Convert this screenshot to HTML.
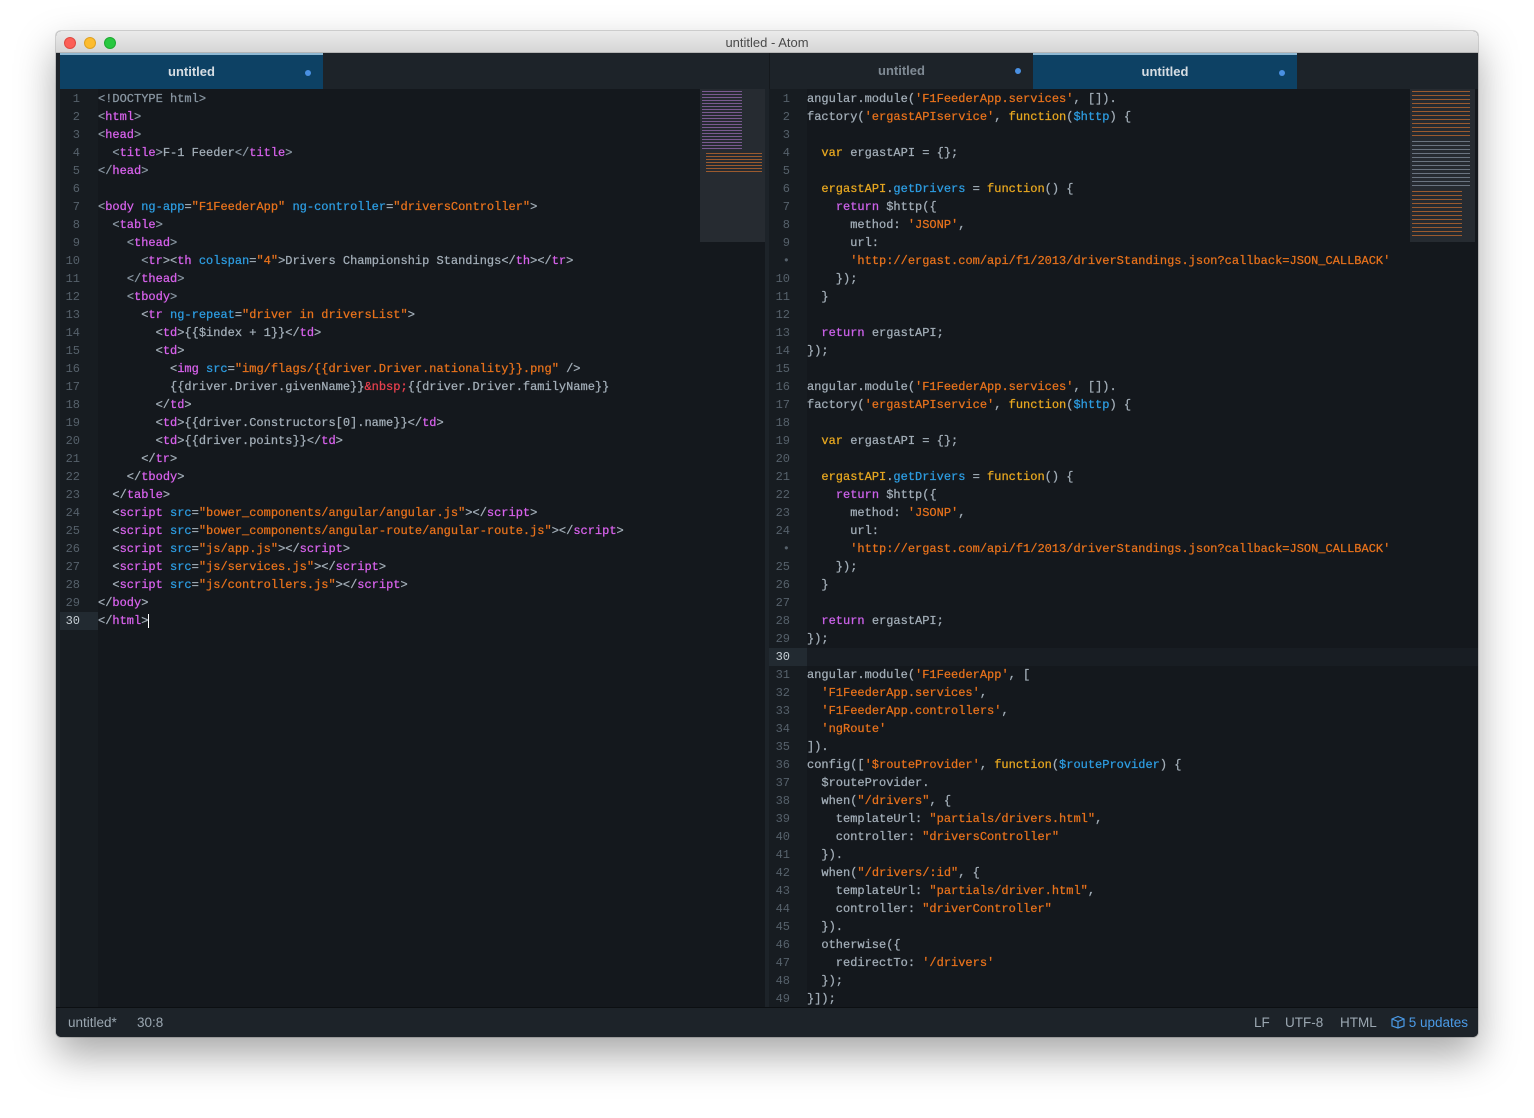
<!DOCTYPE html>
<html><head><meta charset="utf-8">
<style>
*{margin:0;padding:0;box-sizing:border-box}
body{width:1534px;height:1118px;background:#fff;position:relative;overflow:hidden;font-family:"Liberation Sans",sans-serif}
.win{position:absolute;left:56px;top:31px;width:1422px;height:1006px;background:#14181d;border-radius:5px;overflow:hidden;box-shadow:0 18px 40px rgba(0,0,0,.35),0 0 0 1px rgba(0,0,0,.15)}
.title{position:absolute;left:0;top:0;width:100%;height:22px;background:linear-gradient(#ebebeb,#d6d6d6);border-bottom:1px solid #b5b5b5;text-align:center;font-size:13px;line-height:23px;color:#4a4a4a}
.dot{position:absolute;top:6px;width:12px;height:12px;border-radius:50%}
.tabs{position:absolute;top:22px;left:0;width:100%;height:36px;background:#1d2329}
.tab{position:absolute;top:0;height:36px;font-size:13px;line-height:35px;text-align:center;color:#7f8a94;font-weight:600}
.tab.act{background:#0d4164;color:#d6dde3;border-top:2px solid #8fb9d4;line-height:33px}
.tab b{position:absolute;right:12px;top:15px;width:6px;height:6px;border-radius:50%;background:#4a90e2}
.pane{position:absolute;top:58px;height:918px;background:#14181d;overflow:hidden}
.gut{position:absolute;top:0;left:0;height:100%;background:#171c21}
pre{position:absolute;top:1px;font-family:"Liberation Mono",monospace;font-size:12px;line-height:18px;color:#a3aeb8;white-space:pre;-webkit-text-stroke:0.25px}
.nums{text-align:right;color:#56616b;-webkit-text-stroke:0}
.t{color:#d862ec}.a{color:#2d9de2}.s{color:#e8721c}.k{color:#e8a820}.r{color:#cc62ea}.e{color:#e8404e}.g{color:#8a97a3}
.mm{position:absolute;top:0;width:65px;height:153px;background:#262b31}
.status{position:absolute;left:0;top:976px;width:100%;height:30px;background:#1d2329;border-top:1px solid #0c0f12;font-size:13.5px;line-height:30px;color:#9ba7b1}
</style></head><body>
<div class="win">
 <div class="title">untitled - Atom
  <div class="dot" style="left:8px;background:#fc5f57;border:1px solid #de4a42"></div>
  <div class="dot" style="left:28px;background:#fdbc2e;border:1px solid #dea123"></div>
  <div class="dot" style="left:48px;background:#28c840;border:1px solid #1ea931"></div>
 </div>
 <div class="tabs">
  <div class="tab act" style="left:4px;width:263px">untitled<b></b></div>
  <div class="tab" style="left:713px;width:264px;border-left:1px solid #15191d">untitled<b></b></div>
  <div class="tab act" style="left:977px;width:264px">untitled<b></b></div>
 </div>
 <div style="position:absolute;left:0;top:58px;width:4px;height:918px;background:#1d2329"></div>
 <div class="pane" style="left:4px;width:705px">
  <div class="gut" style="width:38px"></div>
  <div style="position:absolute;left:0;top:523px;width:38px;height:18px;background:#222a31"></div>
  <pre class="nums" style="left:0;width:20px"><span>1
2
3
4
5
6
7
8
9
10
11
12
13
14
15
16
17
18
19
20
21
22
23
24
25
26
27
28
29
</span><span style="color:#c8d0d6">30</span></pre>
  <pre style="left:38px"><span class="g">&lt;!DOCTYPE html&gt;</span>
<span class="g">&lt;</span><span class="t">html</span><span class="g">&gt;</span>
<span class="g">&lt;</span><span class="t">head</span><span class="g">&gt;</span>
  <span class="g">&lt;</span><span class="t">title</span><span class="g">&gt;</span>F-1 Feeder<span class="g">&lt;/</span><span class="t">title</span><span class="g">&gt;</span>
<span class="g">&lt;/</span><span class="t">head</span><span class="g">&gt;</span>

<span class="g">&lt;</span><span class="t">body</span> <span class="a">ng-app</span>=<span class="s">"F1FeederApp"</span> <span class="a">ng-controller</span>=<span class="s">"driversController"</span>&gt;
  <span class="g">&lt;</span><span class="t">table</span><span class="g">&gt;</span>
    <span class="g">&lt;</span><span class="t">thead</span><span class="g">&gt;</span>
      <span class="g">&lt;</span><span class="t">tr</span>&gt;&lt;<span class="t">th</span> <span class="a">colspan</span>=<span class="s">"4"</span>&gt;Drivers Championship Standings&lt;/<span class="t">th</span>&gt;&lt;/<span class="t">tr</span>&gt;
    <span class="g">&lt;/</span><span class="t">thead</span><span class="g">&gt;</span>
    <span class="g">&lt;</span><span class="t">tbody</span><span class="g">&gt;</span>
      &lt;<span class="t">tr</span> <span class="a">ng-repeat</span>=<span class="s">"driver in driversList"</span>&gt;
        &lt;<span class="t">td</span>&gt;{{$index + 1}}&lt;/<span class="t">td</span>&gt;
        &lt;<span class="t">td</span>&gt;
          &lt;<span class="t">img</span> <span class="a">src</span>=<span class="s">"img/flags/{{driver.Driver.nationality}}.png"</span> /&gt;
          {{driver.Driver.givenName}}<span class="e">&amp;nbsp;</span>{{driver.Driver.familyName}}
        &lt;/<span class="t">td</span>&gt;
        &lt;<span class="t">td</span>&gt;{{driver.Constructors[0].name}}&lt;/<span class="t">td</span>&gt;
        &lt;<span class="t">td</span>&gt;{{driver.points}}&lt;/<span class="t">td</span>&gt;
      &lt;/<span class="t">tr</span>&gt;
    &lt;/<span class="t">tbody</span>&gt;
  &lt;/<span class="t">table</span>&gt;
  &lt;<span class="t">script</span> <span class="a">src</span>=<span class="s">"bower_components/angular/angular.js"</span>&gt;&lt;/<span class="t">script</span>&gt;
  &lt;<span class="t">script</span> <span class="a">src</span>=<span class="s">"bower_components/angular-route/angular-route.js"</span>&gt;&lt;/<span class="t">script</span>&gt;
  &lt;<span class="t">script</span> <span class="a">src</span>=<span class="s">"js/app.js"</span>&gt;&lt;/<span class="t">script</span>&gt;
  &lt;<span class="t">script</span> <span class="a">src</span>=<span class="s">"js/services.js"</span>&gt;&lt;/<span class="t">script</span>&gt;
  &lt;<span class="t">script</span> <span class="a">src</span>=<span class="s">"js/controllers.js"</span>&gt;&lt;/<span class="t">script</span>&gt;
&lt;/<span class="t">body</span>&gt;
&lt;/<span class="t">html</span>&gt;<span style="border-left:1.5px solid #fff"></span></pre>
  <div class="mm" style="left:640px">
   <div style="margin:2px 0 0 2px;width:40px;height:60px;background:repeating-linear-gradient(#7a5a90 0 1px,transparent 1px 3px)"></div>
   <div style="margin:2px 0 0 6px;width:56px;height:20px;background:repeating-linear-gradient(#9b5a2e 0 1px,transparent 1px 3px)"></div>
  </div>
 </div>
 <div style="position:absolute;left:709px;top:58px;width:4px;height:918px;background:#1d2329"></div>
 <div class="pane" style="left:713px;width:709px">
  <div class="gut" style="width:38px"></div>
  <div style="position:absolute;left:0;top:559px;width:709px;height:18px;background:#181d23"></div>
  <div style="position:absolute;left:0;top:559px;width:38px;height:18px;background:#222a31"></div>
  <pre class="nums" style="left:0;width:21px">1
2
3
4
5
6
7
8
9
•
10
11
12
13
14
15
16
17
18
19
20
21
22
23
24
•
25
26
27
28
29
<span style="color:#c8d0d6">30</span>
31
32
33
34
35
36
37
38
39
40
41
42
43
44
45
46
47
48
49</pre>
  <pre style="left:38px">angular.module(<span class="s">'F1FeederApp.services'</span>, []).
factory(<span class="s">'ergastAPIservice'</span>, <span class="k">function</span>(<span class="a">$http</span>) {

  <span class="k">var</span> ergastAPI = {};

  <span class="k">ergastAPI</span>.<span class="a">getDrivers</span> = <span class="k">function</span>() {
    <span class="r">return</span> $http({
      method: <span class="s">'JSONP'</span>,
      url:
      <span class="s">'http://ergast.com/api/f1/2013/driverStandings.json?callback=JSON_CALLBACK'</span>
    });
  }

  <span class="r">return</span> ergastAPI;
});

angular.module(<span class="s">'F1FeederApp.services'</span>, []).
factory(<span class="s">'ergastAPIservice'</span>, <span class="k">function</span>(<span class="a">$http</span>) {

  <span class="k">var</span> ergastAPI = {};

  <span class="k">ergastAPI</span>.<span class="a">getDrivers</span> = <span class="k">function</span>() {
    <span class="r">return</span> $http({
      method: <span class="s">'JSONP'</span>,
      url:
      <span class="s">'http://ergast.com/api/f1/2013/driverStandings.json?callback=JSON_CALLBACK'</span>
    });
  }

  <span class="r">return</span> ergastAPI;
});

angular.module(<span class="s">'F1FeederApp'</span>, [
  <span class="s">'F1FeederApp.services'</span>,
  <span class="s">'F1FeederApp.controllers'</span>,
  <span class="s">'ngRoute'</span>
]).
config([<span class="s">'$routeProvider'</span>, <span class="k">function</span>(<span class="a">$routeProvider</span>) {
  $routeProvider.
  when(<span class="s">"/drivers"</span>, {
    templateUrl: <span class="s">"partials/drivers.html"</span>,
    controller: <span class="s">"driversController"</span>
  }).
  when(<span class="s">"/drivers/:id"</span>, {
    templateUrl: <span class="s">"partials/driver.html"</span>,
    controller: <span class="s">"driverController"</span>
  }).
  otherwise({
    redirectTo: <span class="s">'/drivers'</span>
  });
}]);</pre>
  <div class="mm" style="left:641px">
   <div style="margin:2px 0 0 2px;width:58px;height:48px;background:repeating-linear-gradient(#9b5a2e 0 1px,transparent 1px 4px)"></div>
   <div style="margin:2px 0 0 2px;width:58px;height:48px;background:repeating-linear-gradient(#6a7480 0 1px,transparent 1px 4px)"></div>
   <div style="margin:2px 0 0 2px;width:50px;height:48px;background:repeating-linear-gradient(#9b5a2e 0 1px,transparent 1px 4px)"></div>
  </div>
 </div>
 <div class="status">
  <span style="position:absolute;left:12px">untitled*</span>
  <span style="position:absolute;left:81px">30:8</span>
  <span style="position:absolute;left:1198px">LF</span>
  <span style="position:absolute;left:1229px">UTF-8</span>
  <span style="position:absolute;left:1284px">HTML</span>
  <span style="position:absolute;left:1335px;color:#4b9be8"><svg width="14" height="14" viewBox="0 0 14 14" style="vertical-align:-2px"><path d="M1 4 L7 1.5 L13 4 L13 11 L7 13 L1 11 Z M1 4 L7 6.5 L13 4 M7 6.5 L7 13" fill="none" stroke="#4b9be8" stroke-width="1.2"/></svg> 5 updates</span>
 </div>
</div>
</body></html>
